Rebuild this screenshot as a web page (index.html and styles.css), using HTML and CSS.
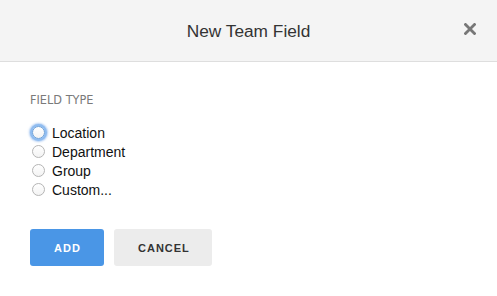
FILE: index.html
```html
<!DOCTYPE html>
<html>
<head>
<meta charset="utf-8">
<link rel="stylesheet" href="styles.css">
</head>
<body>
<div class="dialog">
  <header class="dialog-header">
    <h1 class="dialog-title">New Team Field</h1>
    <button class="close-btn" aria-label="Close">
      <svg width="12" height="12" viewBox="0 0 12 12"><path d="M1.5 1.5 L10.5 10.5 M10.5 1.5 L1.5 10.5" stroke="#777" stroke-width="2.8" stroke-linecap="square" fill="none"/></svg>
    </button>
  </header>
  <main class="dialog-body">
    <div class="field-label">FIELD TYPE</div>
    <div class="radio-list">
      <label class="radio-row"><input type="radio" name="ft" class="radio focused" checked><span>Location</span></label>
      <label class="radio-row"><input type="radio" name="ft" class="radio"><span>Department</span></label>
      <label class="radio-row"><input type="radio" name="ft" class="radio"><span>Group</span></label>
      <label class="radio-row"><input type="radio" name="ft" class="radio"><span>Custom...</span></label>
    </div>
    <div class="actions">
      <button class="btn btn-primary">ADD</button>
      <button class="btn btn-secondary">CANCEL</button>
    </div>
  </main>
</div>
</body>
</html>
```

FILE: styles.css
```css
html, body {
  margin: 0;
  padding: 0;
  background: #fff;
  font-family: "Liberation Sans", Arial, sans-serif;
}
.dialog {
  width: 497px;
  height: 296px;
}
.dialog-header {
  height: 61px;
  background: #f4f4f4;
  border-bottom: 1px solid #dedede;
  display: flex;
  align-items: center;
  justify-content: center;
  position: relative;
}
.dialog-title {
  margin: 0;
  font-size: 17.3px;
  font-weight: normal;
  color: #333;
  padding-top: 1px;
}
.close-btn {
  position: absolute;
  right: 21px;
  top: 23px;
  width: 12px;
  height: 12px;
  padding: 0;
  border: 0;
  background: transparent;
  display: flex;
}
.dialog-body {
  padding: 31px 30px 0 31px;
}
.field-label {
  font-family: "DejaVu Sans Condensed", "DejaVu Sans", sans-serif;
  font-stretch: condensed;
  font-size: 12.6px;
  line-height: 14px;
  color: #7a7a7a;
  margin-left: -1px;
  margin-bottom: 16px;
}
.radio-list {
  display: flex;
  flex-direction: column;
}
.radio-row {
  display: flex;
  align-items: center;
  height: 19px;
  font-size: 14px;
  color: #111;
}
.radio {
  appearance: none;
  -webkit-appearance: none;
  width: 13px;
  height: 13px;
  margin: 0 7px 0 1px;
  border: 1px solid #b5b5b5;
  border-radius: 50%;
  background: linear-gradient(#fff, #f3f3f3);
  box-sizing: border-box;
}
.radio.focused {
  border: 1px solid #6a9fd8;
  box-shadow: 0 0 0 2px #8fbcf0, 0 0 2px 3px rgba(120, 170, 235, 0.6);
}
.actions {
  display: flex;
  gap: 10px;
  margin-top: 30px;
  margin-left: -1px;
}
.btn {
  height: 37px;
  padding: 0 24px;
  border: 0;
  border-radius: 3px;
  font-family: "Liberation Sans", Arial, sans-serif;
  font-size: 11px;
  font-weight: bold;
  letter-spacing: 1px;
}
.btn-primary {
  background: #4a96e6;
  color: #fff;
  width: 74px;
}
.btn-secondary {
  background: #ececec;
  color: #333;
  width: 98px;
}
```
